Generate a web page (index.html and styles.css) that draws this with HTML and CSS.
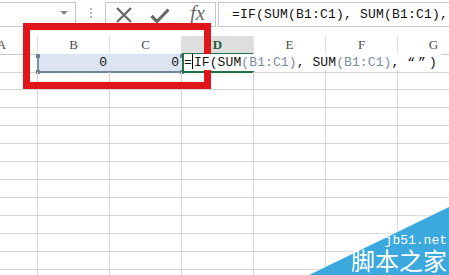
FILE: index.html
```html
<!DOCTYPE html>
<html lang="zh-CN">
<head>
  <meta charset="UTF-8">
  <title>IF SUM</title>
  <link rel="stylesheet" href="styles.css">
</head>
<body>
  <!-- barra de fórmulas -->
  <div class="formula-bar">
    <div class="name-box"><span class="caret"></span></div>
    <div class="grip"><i></i><i></i><i></i></div>
    <div class="fx-buttons">
      <svg class="btn-cancel" width="18" height="18" viewBox="0 0 18 18">
        <path d="M2 2 L16 16 M16 2 L2 16" stroke="#6b6b6b" stroke-width="2.4" fill="none"/>
      </svg>
      <svg class="btn-enter" width="20" height="16" viewBox="0 0 20 16">
        <path d="M1.5 8 L7 13.5 L18.5 1.5" stroke="#6b6b6b" stroke-width="3.2" fill="none"/>
      </svg>
      <span class="fx">fx</span>
    </div>
    <div class="formula-input">=IF(SUM(B1:C1), SUM(B1:C1),</div>
  </div>

  <!-- planilha -->
  <div class="sheet">
    <div class="row head">
      <div class="cell">A</div><div class="cell">B</div><div class="cell">C</div><div class="cell active">D</div><div class="cell">E</div><div class="cell">F</div><div class="cell">G</div>
    </div>
    <div class="row first">
      <div class="cell"></div>
      <div class="cell sel sel-left">0<i class="h tl"></i><i class="h bl"></i></div>
      <div class="cell sel sel-right">0<i class="h tr"></i><i class="h br"></i></div>
      <div class="cell editing">
        <span class="editor">=<span class="cursor"></span>IF(SUM<span class="ref">(B1:C1)</span>, SUM<span class="ref">(B1:C1)</span>, <span class="quotes">“”</span>)</span>
      </div>
      <div class="cell"></div><div class="cell"></div><div class="cell"></div>
    </div>
    <div class="row"><div class="cell"></div><div class="cell"></div><div class="cell"></div><div class="cell"></div><div class="cell"></div><div class="cell"></div><div class="cell"></div></div>
    <div class="row"><div class="cell"></div><div class="cell"></div><div class="cell"></div><div class="cell"></div><div class="cell"></div><div class="cell"></div><div class="cell"></div></div>
    <div class="row"><div class="cell"></div><div class="cell"></div><div class="cell"></div><div class="cell"></div><div class="cell"></div><div class="cell"></div><div class="cell"></div></div>
    <div class="row"><div class="cell"></div><div class="cell"></div><div class="cell"></div><div class="cell"></div><div class="cell"></div><div class="cell"></div><div class="cell"></div></div>
    <div class="row"><div class="cell"></div><div class="cell"></div><div class="cell"></div><div class="cell"></div><div class="cell"></div><div class="cell"></div><div class="cell"></div></div>
    <div class="row"><div class="cell"></div><div class="cell"></div><div class="cell"></div><div class="cell"></div><div class="cell"></div><div class="cell"></div><div class="cell"></div></div>
    <div class="row"><div class="cell"></div><div class="cell"></div><div class="cell"></div><div class="cell"></div><div class="cell"></div><div class="cell"></div><div class="cell"></div></div>
    <div class="row"><div class="cell"></div><div class="cell"></div><div class="cell"></div><div class="cell"></div><div class="cell"></div><div class="cell"></div><div class="cell"></div></div>
    <div class="row"><div class="cell"></div><div class="cell"></div><div class="cell"></div><div class="cell"></div><div class="cell"></div><div class="cell"></div><div class="cell"></div></div>
    <div class="row"><div class="cell"></div><div class="cell"></div><div class="cell"></div><div class="cell"></div><div class="cell"></div><div class="cell"></div><div class="cell"></div></div>
    <div class="row"><div class="cell"></div><div class="cell"></div><div class="cell"></div><div class="cell"></div><div class="cell"></div><div class="cell"></div><div class="cell"></div></div>
    <div class="row"><div class="cell"></div><div class="cell"></div><div class="cell"></div><div class="cell"></div><div class="cell"></div><div class="cell"></div><div class="cell"></div></div>
  </div>

  <!-- moldura vermelha de destaque -->
  <div class="callout"></div>

  <!-- marca d'água -->
  <div class="watermark">
    <div class="wm-site">jb51.net</div>
    <div class="wm-name">脚本之家</div>
  </div>
</body>
</html>
```

FILE: styles.css
```css
* {
  box-sizing: border-box;
}

body {
  margin: 0;
  width: 449px;
  height: 275px;
  overflow: hidden;
  position: relative;
  background: #fff;
  font-family: "Liberation Mono", monospace;
  color: #111;
}

/* Barra de fórmulas */
.formula-bar {
  display: flex;
  height: 25px;
  margin-top: 2px;
}

.name-box {
  width: 77px;
  margin-left: -1px;
  border: 1px solid #c6c6c6;
  display: flex;
  align-items: center;
  justify-content: flex-end;
  padding-right: 7px;
}

.caret {
  width: 0;
  height: 0;
  border-style: solid;
  border-width: 4px 4px 0 4px;
  border-color: #8a8a8a transparent transparent transparent;
  margin-top: -3px;
}

.grip {
  width: 29px;
  display: flex;
  flex-direction: column;
  align-items: center;
  justify-content: center;
  gap: 2px;
  padding-bottom: 4px;
}

.grip i {
  width: 2px;
  height: 2px;
  background: #b5b5b5;
}

.fx-buttons {
  width: 111px;
  border: 1px solid #c6c6c6;
  display: flex;
  align-items: center;
  padding-left: 9px;
}

.btn-enter {
  margin-left: 17px;
  margin-top: 3px;
}

.fx {
  margin-left: 20px;
  font-family: "Liberation Serif", serif;
  font-style: italic;
  font-size: 21px;
  color: #6b6b6b;
  margin-top: -2px;
}

.formula-input {
  flex: 1;
  margin-left: 2px;
  border: 1px solid #c6c6c6;
  border-right: none;
  padding-left: 13px;
  font-size: 13px;
  letter-spacing: 0.2px;
  line-height: 23px;
  white-space: nowrap;
  overflow: hidden;
}

/* Planilha */
.sheet {
  margin-top: 9px;
  margin-left: -34px;
}

.row {
  display: grid;
  grid-template-columns: repeat(7, 72px);
  height: 18px;
}

.cell {
  border-right: 1px solid #d4d4d4;
  border-bottom: 1px solid #d4d4d4;
  position: relative;
}

.head .cell {
  font-family: "Liberation Serif", serif;
  font-size: 13px;
  color: #4a4a4a;
  text-align: center;
  line-height: 17px;
  border-right-color: #e2e2e2;
  border-bottom-color: #c9c9c9;
}

.head .cell.active {
  background: #dedede;
  color: #1e5b34;
  font-weight: bold;
  border-bottom: 2px solid #217346;
}

.first .cell {
  font-size: 13px;
  line-height: 17px;
}

/* Intervalo B1:C1 destacado */
.sel {
  background: #dce4f2;
  text-align: right;
  padding-right: 3px;
  border-bottom: 2px solid #6f8499;
}

.sel-left,
.sel-right {
  border-right: none;
}

.h {
  position: absolute;
  width: 4px;
  height: 4px;
  background: #6f8499;
}

.h.tl { left: -2px; top: 0; }
.h.bl { left: -2px; bottom: -3px; }
.h.tr { right: -2px; top: 0; }
.h.br { right: -2px; bottom: -3px; }

.sel-left::before {
  content: "";
  position: absolute;
  left: -1px;
  top: 0;
  bottom: -2px;
  width: 2px;
  background: #7e93a8;
}

/* Célula D1 em edição */
.editing {
  border-right: none;
  border-bottom: 2px solid #217346;
}

.editing::before {
  content: "";
  position: absolute;
  left: 0;
  top: 0;
  bottom: -2px;
  width: 2px;
  background: #217346;
  z-index: 2;
}

.editor {
  position: absolute;
  left: 2px;
  top: 0;
  height: 16px;
  padding-right: 4px;
  background: #fff;
  white-space: nowrap;
  letter-spacing: 0.1px;
  z-index: 1;
}

.cursor {
  display: inline-block;
  width: 1px;
  height: 15px;
  background: #000;
  vertical-align: -3px;
  margin: 0 1px 0 0;
}

.ref {
  color: #7a8ea3;
}

.quotes {
  letter-spacing: 3px;
}

/* Moldura vermelha */
.callout {
  position: absolute;
  left: 23px;
  top: 23px;
  width: 188px;
  height: 66px;
  border: 7px solid #e0161b;
}

/* Marca d'água */
.watermark {
  position: absolute;
  right: 0;
  bottom: 0;
  width: 150px;
  height: 78px;
  color: #fff;
  text-align: right;
  padding-right: 2px;
}

.watermark::before,
.watermark::after {
  content: "";
  position: absolute;
  right: 0;
  bottom: 0;
  clip-path: polygon(0 100%, 100% 0, 100% 100%);
}

/* halo claro acima do triângulo */
.watermark::before {
  width: 150px;
  height: 78px;
  background: linear-gradient(to bottom right, rgba(255,255,255,0) 40%, rgba(255,255,255,0.75) 75%);
}

.watermark::after {
  width: 140px;
  height: 68px;
  background: #3ba8de;
}

.wm-site,
.wm-name {
  position: relative;
  z-index: 1;
}

.wm-site {
  margin-top: 37px;
  font-size: 13px;
  line-height: 14px;
}

.wm-name {
  font-family: "Noto Sans CJK SC", sans-serif;
  font-size: 24px;
  line-height: 26px;
  margin-top: -1px;
}
```
